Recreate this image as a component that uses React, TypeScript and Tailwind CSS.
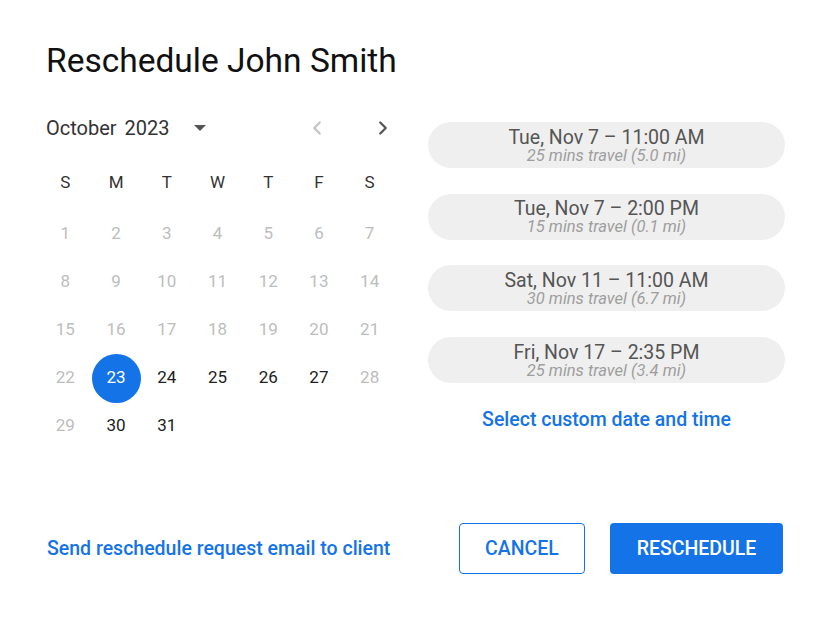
import { ChevronLeft, ChevronRight } from 'lucide-react';

const weekdays = ['S', 'M', 'T', 'W', 'T', 'F', 'S'];

// October 2023 starts on a Sunday; only 23–27 and 30/31 are bookable
const active = new Set([23, 24, 25, 26, 27, 30, 31]);
const selected = 23;

const slots = [
  { when: 'Tue, Nov 7 – 11:00 AM', travel: '25 mins travel (5.0 mi)' },
  { when: 'Tue, Nov 7 – 2:00 PM', travel: '15 mins travel (0.1 mi)' },
  { when: 'Sat, Nov 11 – 11:00 AM', travel: '30 mins travel (6.7 mi)' },
  { when: 'Fri, Nov 17 – 2:35 PM', travel: '25 mins travel (3.4 mi)' },
];

function Calendar() {
  const days = Array.from({ length: 31 }, (_, i) => i + 1);
  return (
    <div className="w-[355px]">
      <div className="flex items-center h-[40px] pl-[6px]">
        <span className="text-[20px] text-[#333] [word-spacing:3px]">October 2023</span>
        <svg className="ml-[24px]" width="12" height="6" viewBox="0 0 12 6">
          <path d="M0 0h12L6 6z" fill="#555" />
        </svg>
        <button className="ml-auto w-[40px] h-[40px] flex items-center justify-center text-[#c4c4c4]">
          <ChevronLeft size={22} strokeWidth={2.5} />
        </button>
        <button className="ml-[26px] mr-[-8px] w-[40px] h-[40px] flex items-center justify-center text-[#555]">
          <ChevronRight size={22} strokeWidth={2.5} />
        </button>
      </div>
      <div className="grid grid-cols-7 mt-[21px]">
        {weekdays.map((d, i) => (
          <div key={i} className="h-[28px] flex items-center justify-center text-[17px] text-[#333]">
            {d}
          </div>
        ))}
      </div>
      <div className="grid grid-cols-7 mt-[13px]">
        {days.map((d) => (
          <div key={d} className="h-[48px] flex items-center justify-center">
            {d === selected ? (
              <span className="w-[49px] h-[49px] rounded-full bg-[#1473e6] text-white flex items-center justify-center text-[17px]">
                {d}
              </span>
            ) : (
              <span className={`text-[17px] ${active.has(d) ? 'text-[#212121]' : 'text-[#bdbdbd]'}`}>{d}</span>
            )}
          </div>
        ))}
      </div>
    </div>
  );
}

export default function App() {
  return (
    <div
      className="w-[832px] h-[618px] bg-white pl-[40px] pr-[47px] pt-[41px]"
      style={{ fontFamily: 'Roboto, sans-serif' }}
    >
      <h1 className="text-[33.5px] leading-[40px] text-[#111] pl-[6px]">Reschedule John Smith</h1>
      <div className="flex gap-[33px] mt-[27px]">
        <Calendar />
        <div className="flex-1 flex flex-col pt-[14px]">
          <div className="flex flex-col gap-[25.7px]">
            {slots.map((s) => (
              <button
                key={s.when}
                className="h-[46px] pt-[3px] rounded-full bg-[#efefef] flex flex-col items-center justify-center"
              >
                <span className="text-[19.5px] leading-[18px] text-[#555]">{s.when}</span>
                <span className="text-[16.5px] leading-[18px] italic text-[#9e9e9e]">{s.travel}</span>
              </button>
            ))}
          </div>
          <button className="mt-[22px] h-[24px] text-[19.5px] font-medium text-[#1473e6] text-center">
            Select custom date and time
          </button>
        </div>
      </div>
      <div className="flex items-center mt-[73px] pl-[7px] pr-[2px]">
        <button className="text-[19.5px] font-medium text-[#1473e6]">Send reschedule request email to client</button>
        <button className="ml-auto w-[126px] h-[51px] rounded-[4px] border border-[#1473e6] text-[#1473e6] text-[19.5px] font-medium">
          CANCEL
        </button>
        <button className="ml-[25px] w-[173px] h-[51px] rounded-[4px] bg-[#1473e6] text-white text-[19.5px] font-medium">
          RESCHEDULE
        </button>
      </div>
    </div>
  );
}
